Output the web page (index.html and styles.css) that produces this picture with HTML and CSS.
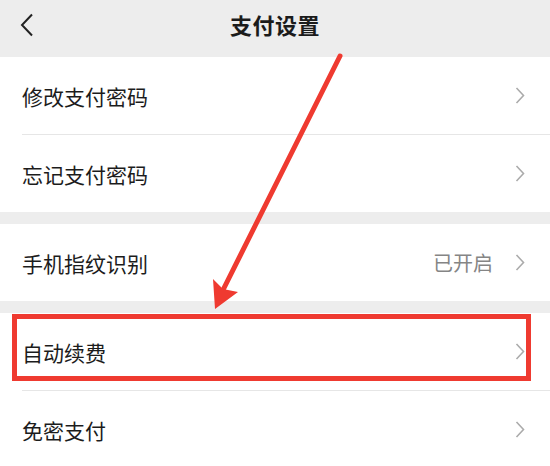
FILE: index.html
```html
<!DOCTYPE html>
<html lang="zh-CN">
<head>
  <meta charset="UTF-8" />
  <meta name="viewport" content="width=device-width, initial-scale=1" />
  <title>支付设置</title>
  <link rel="stylesheet" href="styles.css">
</head>
<body>
  <div class="page">
    <header class="topbar">
      <svg class="back" width="14" height="24" viewBox="0 0 14 24">
        <path d="M12 1.5 L2 12 L12 22.5" />
      </svg>
      <h1>支付设置</h1>
    </header>

    <!-- 密码 -->
    <ul class="group">
      <li class="cell">
        <div class="cell-body">
          <span class="label">修改支付密码</span>
          <svg class="chevron" width="10" height="17" viewBox="0 0 10 17"><path d="M1.5 1 L8.5 8.5 L1.5 16" /></svg>
        </div>
      </li>
      <li class="cell">
        <div class="cell-body">
          <span class="label">忘记支付密码</span>
          <svg class="chevron" width="10" height="17" viewBox="0 0 10 17"><path d="M1.5 1 L8.5 8.5 L1.5 16" /></svg>
        </div>
      </li>
    </ul>

    <!-- 指纹 -->
    <ul class="group">
      <li class="cell">
        <div class="cell-body">
          <span class="label">手机指纹识别</span>
          <span class="value">已开启</span>
          <svg class="chevron" width="10" height="17" viewBox="0 0 10 17"><path d="M1.5 1 L8.5 8.5 L1.5 16" /></svg>
        </div>
      </li>
    </ul>

    <!-- 续费 -->
    <ul class="group">
      <li class="cell">
        <div class="cell-body">
          <span class="label">自动续费</span>
          <svg class="chevron" width="10" height="17" viewBox="0 0 10 17"><path d="M1.5 1 L8.5 8.5 L1.5 16" /></svg>
        </div>
      </li>
      <li class="cell">
        <div class="cell-body">
          <span class="label">免密支付</span>
          <svg class="chevron" width="10" height="17" viewBox="0 0 10 17"><path d="M1.5 1 L8.5 8.5 L1.5 16" /></svg>
        </div>
      </li>
    </ul>

    <!-- 标注 -->
    <div class="highlight"></div>
    <svg class="arrow" width="550" height="466" viewBox="0 0 550 466">
      <line x1="340" y1="56" x2="222" y2="292" />
      <polygon points="215,309 213,279 223,289 238,292" />
    </svg>
  </div>
</body>
</html>
```

FILE: styles.css
```css
body {
  margin: 0;
  padding: 0;
  background-color: #ffffff;
  font-family: "Noto Sans CJK SC", "Noto Sans", sans-serif;
}

.page {
  position: relative;
  width: 550px;
  height: 466px;
  overflow: hidden;
  background-color: #ededed;
}

.topbar {
  height: 57px;
  box-sizing: border-box;
  padding-bottom: 9px;
  display: flex;
  align-items: center;
  justify-content: center;
  position: relative;
  background-color: #ededed;
}

.topbar h1 {
  margin: 0;
  font-size: 22px;
  line-height: 1;
  font-weight: bold;
  color: #1b1b1b;
  letter-spacing: 0.5px;
}

.back {
  position: absolute;
  left: 20px;
  top: 13px;
}

.back path {
  fill: none;
  stroke: #222;
  stroke-width: 2;
}

.group {
  list-style: none;
  margin: 0 0 12px 0;
  padding: 0;
  background-color: #ffffff;
}

.cell {
  padding-left: 22px;
}

.cell-body {
  height: 77px;
  display: flex;
  align-items: center;
  padding-right: 25px;
}

.cell + .cell .cell-body {
  border-top: 1px solid #e6e6e6;
}

.label {
  flex: 1;
  font-size: 21px;
  color: #1c1c1c;
}

.value {
  font-size: 20px;
  color: #858585;
  margin-right: 22px;
}

.chevron path {
  fill: none;
  stroke: #ababab;
  stroke-width: 1.6;
}

.highlight {
  position: absolute;
  left: 12px;
  top: 314px;
  width: 519px;
  height: 67px;
  box-sizing: border-box;
  border: 5px solid #ef3a30;
}

.arrow {
  position: absolute;
  left: 0;
  top: 0;
  pointer-events: none;
}

.arrow line {
  stroke: #ef3a30;
  stroke-width: 5;
  stroke-linecap: round;
}

.arrow polygon {
  fill: #ef3a30;
}
```
